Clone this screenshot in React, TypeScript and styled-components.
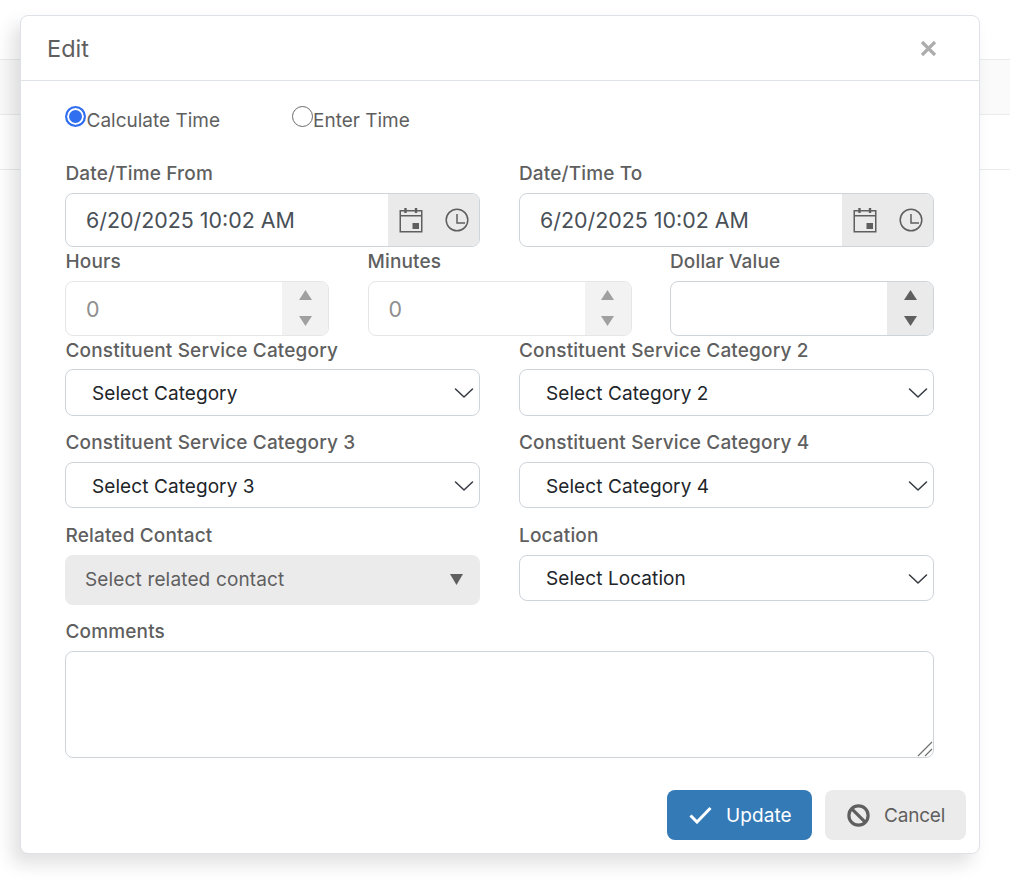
import React from "react";
import styled, { createGlobalStyle } from "styled-components";

const Global = createGlobalStyle`
  html, body { margin: 0; padding: 0; background: #fff; }
  body { font-family: Inter, "Liberation Sans", sans-serif; }
  * { box-sizing: border-box; }
`;

const Page = styled.div`
  position: relative;
  width: 1010px;
  height: 880px;
  overflow: hidden;
  padding-top: 59px;
`;
const BackRow = styled.div<{ $shade?: boolean }>`
  height: 55px;
  border-top: 1px solid #e9ecef;
  background: ${(p) => (p.$shade ? "#fafafa" : "#fff")};
`;
const Dialog = styled.div`
  position: absolute;
  left: 20px;
  top: 15px;
  width: 960px;
  height: 839px;
  background: #fff;
  border: 1px solid #dee2e6;
  border-radius: 8px;
  box-shadow: -8px 10px 18px rgba(0, 0, 0, 0.12);
  display: flex;
  flex-direction: column;
`;
const Header = styled.div`
  height: 65px;
  flex: none;
  border-bottom: 1px solid #dee2e6;
  padding: 0 42px 0 26px;
  display: flex;
  align-items: center;
  justify-content: space-between;
`;
const Title = styled.div`
  font-size: 23.5px;
  color: #5f5f5f;
  line-height: 1;
  margin-top: 1px;
`;
const Body = styled.div`
  padding: 26px 45px 0 44px;
  flex: 1;
`;
const RadioRow = styled.div`
  display: flex;
  height: 26px;
`;
const RadioLabel = styled.label<{ $width: number }>`
  display: flex;
  width: ${(p) => p.$width}px;
  font-size: 19px;
  color: #5f5f5f;
  line-height: 28px;
`;
const RadioDot = styled.span<{ $on?: boolean }>`
  width: 21px;
  height: 21px;
  flex: none;
  border-radius: 50%;
  margin-top: -1px;
  margin-right: ${(p) => (p.$on ? "0.5px" : "0")};
  background: ${(p) => (p.$on ? "#2f6ff0" : "#fff")};
  border: ${(p) => (p.$on ? "2px solid #2f6ff0" : "1.5px solid #6a6a6a")};
  box-shadow: ${(p) => (p.$on ? "inset 0 0 0 2px #fff" : "none")};
`;
const Field = styled.div``;
const Label = styled.div<{ $h: number }>`
  height: ${(p) => p.$h}px;
  font-size: 19px;
  font-weight: 500;
  letter-spacing: 0.15px;
  color: #5f5f5f;
  line-height: 26px;
`;
const Grid = styled.div<{ $cols: number; $top?: number }>`
  display: grid;
  grid-template-columns: repeat(${(p) => p.$cols}, minmax(0, 1fr));
  column-gap: ${(p) => (p.$cols === 2 ? 39 : 38.5)}px;
  margin-top: ${(p) => p.$top ?? 0}px;

  ${Field}:first-child ${Label} {
    padding-left: 0.5px;
  }
`;
const CommentsLabel = styled(Label)`
  margin-top: 14px;
  padding-left: 0.5px;
`;
const Shell = styled.div<{ $h: number; $off?: boolean }>`
  height: ${(p) => p.$h}px;
  display: flex;
  border: 1px solid ${(p) => (p.$off ? "#e6e6e6" : "#ced4da")};
  border-radius: 8px;
  overflow: hidden;
  background: #fff;
`;
const TextInput = styled.input<{ $off?: boolean }>`
  flex: 1;
  min-width: 0;
  border: 0;
  outline: 0;
  background: transparent;
  padding: 0 20px;
  font: 400 21.4px Inter, "Liberation Sans", sans-serif;
  color: ${(p) => (p.$off ? "#8f8f8f" : "#495057")};
`;
const Addon = styled.div<{ $w: number; $off?: boolean }>`
  width: ${(p) => p.$w}px;
  flex: none;
  background: ${(p) => (p.$off ? "#f2f2f2" : "#eaeaea")};
  color: ${(p) => (p.$off ? "#a0a0a0" : "#5f5f5f")};
`;
const DateAddon = styled(Addon)`
  display: flex;
  align-items: center;
  padding-left: 11px;
  padding-bottom: 1px;
  gap: 22px;
`;
const SpinAddon = styled(Addon)`
  display: flex;
  flex-direction: column;
  align-items: center;
  padding-top: 8px;
  gap: 16px;
`;
const SelectBox = styled.div<{ $h: number; $shift: number }>`
  height: ${(p) => p.$h}px;
  border: 1px solid #ced4da;
  border-radius: 8px;
  background: #fff;
  padding: ${(p) => p.$shift}px 5px 0 26px;
  display: flex;
  align-items: center;
  justify-content: space-between;
  font-size: 19px;
  letter-spacing: 0.08px;
  color: #212529;
`;
const DisabledSelect = styled.div`
  height: 50px;
  border-radius: 8px;
  background: #ebebeb;
  padding: 0 17px 2px 20px;
  display: flex;
  align-items: center;
  justify-content: space-between;
  font-size: 19px;
  letter-spacing: 0.15px;
  color: #5f5f5f;
`;
const CommentsWrap = styled.div`
  position: relative;
  height: 107px;
`;
const Comments = styled.textarea`
  display: block;
  width: 869px;
  height: 107px;
  border: 1px solid #ced4da;
  border-radius: 8px;
  outline: 0;
  background: #fff;
  resize: none;
`;
const Grip = styled.svg`
  position: absolute;
  right: 1px;
  bottom: 1px;
`;
const Footer = styled.div`
  display: flex;
  justify-content: flex-end;
  gap: 13px;
  padding: 0 13px 13px 0;
`;
const Button = styled.button<{ $primary?: boolean; $w: number }>`
  width: ${(p) => p.$w}px;
  height: 50px;
  border: 0;
  border-radius: 8px;
  display: flex;
  align-items: center;
  padding: 0 0 0 22px;
  gap: 14px;
  font: 400 19px Inter, "Liberation Sans", sans-serif;
  letter-spacing: ${(p) => (p.$primary ? "0.1px" : "-0.2px")};
  background: ${(p) => (p.$primary ? "#337ab7" : "#ebebeb")};
  color: ${(p) => (p.$primary ? "#fff" : "#5f5f5f")};
`;

const CloseIcon = () => (
  <svg width="17" height="17" viewBox="0 0 17 17" fill="none" stroke="#adadad" strokeWidth="3.2">
    <path d="M2 2l13 13M15 2L2 15" />
  </svg>
);
const CalIcon = () => (
  <svg width="24" height="26" viewBox="0 0 24 26" fill="none" stroke="currentColor" strokeWidth="1.5">
    <path d="M1.25 3.75h21.5v21H1.25z" />
    <path d="M1 8.75h22" />
    <path d="M6.5 1v5M17 1v5" strokeWidth="2.4" />
    <rect x="13.5" y="16" width="6.5" height="6" fill="currentColor" stroke="none" />
  </svg>
);
const ClockIcon = () => (
  <svg width="24" height="24" viewBox="0 0 24 24" fill="none" stroke="currentColor" strokeWidth="1.5">
    <circle cx="12" cy="12" r="10.8" />
    <path d="M12 6v9h8" />
  </svg>
);
const Tri = ({ up }: { up?: boolean }) => (
  <svg width="13" height="10" viewBox="0 0 13 10" fill="currentColor">
    <path d={up ? "M6.5 0L13 10H0z" : "M0 0h13L6.5 10z"} />
  </svg>
);
const Chevron = () => (
  <svg width="20" height="12" viewBox="0 0 20 12" fill="none" stroke="#343a40" strokeWidth="1.5" strokeLinecap="round" strokeLinejoin="round">
    <path d="M1.5 2l8.5 8 8.5-8" />
  </svg>
);
const SolidCaret = () => (
  <svg width="13" height="11" viewBox="0 0 13 11" fill="#5f5f5f">
    <path d="M0 0h13L6.5 11z" />
  </svg>
);
const CheckIcon = () => (
  <svg width="23" height="18" viewBox="0 0 23 18" fill="none" stroke="#fff" strokeWidth="3">
    <path d="M1.5 9.5l6.5 6.5L21.5 2" />
  </svg>
);
const BanIcon = () => (
  <svg width="23" height="23" viewBox="0 0 23 23" fill="none" stroke="#5f5f5f" strokeWidth="3.2">
    <circle cx="11.5" cy="11.5" r="9.6" />
    <path d="M4.8 4.8l13.4 13.4" />
  </svg>
);

const DateField = ({ label }: { label: string }) => (
  <Field>
    <Label $h={32}>{label}</Label>
    <Shell $h={54}>
      <TextInput readOnly defaultValue="6/20/2025 10:02 AM" />
      <DateAddon $w={91}>
        <CalIcon />
        <ClockIcon />
      </DateAddon>
    </Shell>
  </Field>
);
const SpinField = ({ label, value, off }: { label: string; value?: string; off?: boolean }) => (
  <Field>
    <Label $h={32}>{label}</Label>
    <Shell $h={55} $off={off}>
      <TextInput readOnly defaultValue={value} $off={off} />
      <SpinAddon $w={46} $off={off}>
        <Tri up />
        <Tri />
      </SpinAddon>
    </Shell>
  </Field>
);
const SelectField = ({ label, text, h, lh, shift = 1 }: { label: string; text: string; h: number; lh: number; shift?: number }) => (
  <Field>
    <Label $h={lh}>{label}</Label>
    <SelectBox $h={h} $shift={shift}>
      {text}
      <Chevron />
    </SelectBox>
  </Field>
);

export default function App() {
  return (
    <Page>
      <Global />
      <BackRow $shade />
      <BackRow />
      <BackRow />
      <Dialog>
        <Header>
          <Title>Edit</Title>
          <CloseIcon />
        </Header>
        <Body>
          <RadioRow>
            <RadioLabel $width={227}>
              <RadioDot $on />
              Calculate Time
            </RadioLabel>
            <RadioLabel $width={140}>
              <RadioDot />
              Enter Time
            </RadioLabel>
          </RadioRow>
          <Grid $cols={2} $top={28}>
            <DateField label="Date/Time From" />
            <DateField label="Date/Time To" />
          </Grid>
          <Grid $cols={3} $top={2}>
            <SpinField label="Hours" value="0" off />
            <SpinField label="Minutes" value="0" off />
            <SpinField label="Dollar Value" />
          </Grid>
          <Grid $cols={2} $top={2}>
            <SelectField label="Constituent Service Category" text="Select Category" lh={31} h={47} />
            <SelectField label="Constituent Service Category 2" text="Select Category 2" lh={31} h={47} />
          </Grid>
          <Grid $cols={2} $top={14}>
            <SelectField label="Constituent Service Category 3" text="Select Category 3" lh={32} h={46} shift={2} />
            <SelectField label="Constituent Service Category 4" text="Select Category 4" lh={32} h={46} shift={2} />
          </Grid>
          <Grid $cols={2} $top={15}>
            <Field>
              <Label $h={32}>Related Contact</Label>
              <DisabledSelect>
                Select related contact
                <SolidCaret />
              </DisabledSelect>
            </Field>
            <SelectField label="Location" text="Select Location" lh={32} h={46} />
          </Grid>
          <CommentsLabel $h={32}>Comments</CommentsLabel>
          <CommentsWrap>
            <Comments />
            <Grip width="16" height="16" viewBox="0 0 16 16" fill="none" stroke="#6f6f6f" strokeWidth="1.2">
              <path d="M1 15L15 1M8 15l7-7" />
            </Grip>
          </CommentsWrap>
        </Body>
        <Footer>
          <Button $primary $w={145}>
            <CheckIcon />
            Update
          </Button>
          <Button $w={141}>
            <BanIcon />
            Cancel
          </Button>
        </Footer>
      </Dialog>
    </Page>
  );
}
